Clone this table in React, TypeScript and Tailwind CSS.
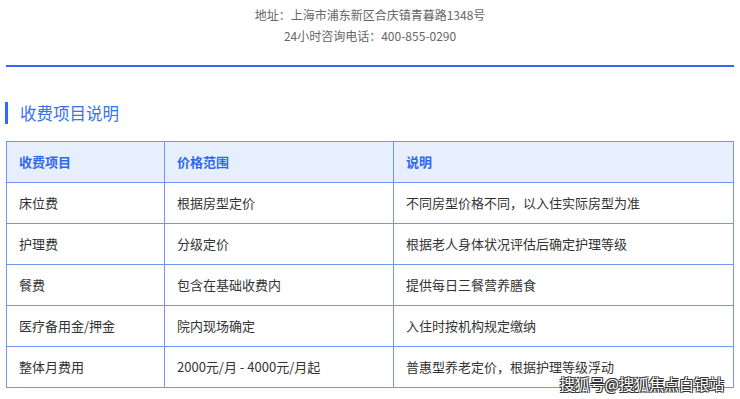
const rows = [
    ['床位费', '根据房型定价', '不同房型价格不同，以入住实际房型为准'],
    ['护理费', '分级定价', '根据老人身体状况评估后确定护理等级'],
    ['餐费', '包含在基础收费内', '提供每日三餐营养膳食'],
    ['医疗备用金/押金', '院内现场确定', '入住时按机构规定缴纳'],
    ['整体月费用', '2000元/月 - 4000元/月起', '普惠型养老定价，根据护理等级浮动'],
];

export default function App() {
    return (
        <div className="relative w-[740px] h-[399px] overflow-hidden bg-white font-['Noto_Sans_CJK_SC','Noto_Sans',sans-serif]">
            <div className="pt-[4px] text-center text-[12px] leading-[21px] text-[#666]">
                <p>地址：上海市浦东新区合庆镇青暮路1348号</p>
                <p>24小时咨询电话：400-855-0290</p>
            </div>
            <div className="mx-[6px] mt-[19px] h-[2px] bg-[#2e6cf3]" />
            <div className="mt-[34px] ml-[5px] flex items-center h-[24px]">
                <span className="w-[3px] h-[22px] bg-[#2e6cf3]" />
                <h2 className="ml-[12px] text-[16.5px] text-[#3a6ff0]">收费项目说明</h2>
            </div>
            <table className="mt-[16px] ml-[6px] w-[728px] border-collapse table-fixed text-[13px]">
                <colgroup>
                    <col className="w-[158px]" />
                    <col className="w-[229px]" />
                    <col />
                </colgroup>
                <thead>
                    <tr className="h-[41px] bg-[#e8effc]">
                        {['收费项目', '价格范围', '说明'].map(h => (
                            <th key={h} className="border border-[#7196f2] px-[12px] text-left font-bold text-[#2f68f0]">{h}</th>
                        ))}
                    </tr>
                </thead>
                <tbody>
                    {rows.map(r => (
                        <tr key={r[0]} className="h-[41px]">
                            {r.map((c, i) => (
                                <td key={i} className="border border-[#7196f2] px-[12px] text-[#333]">{c}</td>
                            ))}
                        </tr>
                    ))}
                </tbody>
            </table>
            <div className="absolute right-[16px] bottom-[6px] text-[15px] leading-[18px] text-white [text-shadow:1px_1px_0_#333,-1px_-1px_0_#333,1px_-1px_0_#333,-1px_1px_0_#333]">
                搜狐号@搜狐焦点白银站
            </div>
        </div>
    );
}
